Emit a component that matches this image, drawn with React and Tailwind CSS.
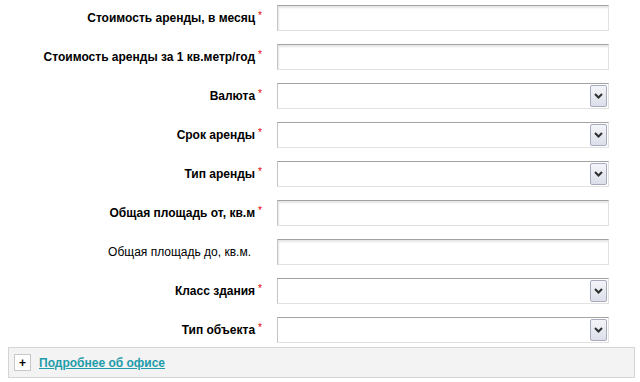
const rows = [
  { label: "Стоимость аренды, в месяц", required: true, type: "input" },
  { label: "Стоимость аренды за 1 кв.метр/год", required: true, type: "input" },
  { label: "Валюта", required: true, type: "select" },
  { label: "Срок аренды", required: true, type: "select" },
  { label: "Тип аренды", required: true, type: "select" },
  { label: "Общая площадь от, кв.м", required: true, type: "input" },
  { label: "Общая площадь до, кв.м.", required: false, type: "input" },
  { label: "Класс здания", required: true, type: "select" },
  { label: "Тип объекта", required: true, type: "select" },
];

const TextInput = () => (
  <div className="h-[26px] w-[332px] border border-t-[#a3a3a3] border-l-[#c4c4c4] border-r-[#e2e2e2] border-b-[#e2e2e2] bg-white shadow-[inset_1px_2px_2px_rgba(0,0,0,0.1)]" />
);

const SelectInput = () => (
  <div className="flex h-[26px] w-[332px] items-stretch justify-end border border-t-[#a3a3a3] border-l-[#c4c4c4] border-r-[#e2e2e2] border-b-[#e2e2e2] bg-white p-px">
    <div className="flex w-[17px] items-center justify-center rounded-[2px] border border-[#a7abbd] bg-gradient-to-b from-[#f4f5f9] to-[#dcdfea]">
      <svg width="9" height="6" viewBox="0 0 9 6">
        <path d="M1 1 L4.5 4.5 L8 1" fill="none" stroke="#2f2f2f" strokeWidth="2" />
      </svg>
    </div>
  </div>
);

export default function App() {
  return (
    <div className="h-[382px] w-[640px] bg-white pt-[5px] font-['Liberation_Sans',Arial,sans-serif] text-[12px] text-black">
      <div className="flex flex-col gap-[13px]">
        {rows.map((row) => (
          <div key={row.label} className="flex items-center">
            <div
              className={`w-[262px] text-right ${row.required ? "font-bold" : "pr-[11px]"}`}
            >
              {row.label}
              {row.required ? (
                <span className="relative top-[-3px] ml-[3px] text-[10px] font-normal text-[#e00000]">
                  *
                </span>
              ) : null}
            </div>
            <div className="ml-[15px]">
              {row.type === "select" ? <SelectInput /> : <TextInput />}
            </div>
          </div>
        ))}
      </div>
      <div className="mx-[8px] mt-[4px] flex h-[31px] w-[627px] items-center border border-[#d4d4d4] bg-[#f3f3f3] pl-[5px]">
        <div className="flex h-[17px] w-[17px] items-center justify-center border border-[#c8c8c8] bg-white text-[12px] font-bold leading-none">
          +
        </div>
        <a href="#" className="ml-[8px] font-bold text-[#1e9cab] underline">
          Подробнее об офисе
        </a>
      </div>
    </div>
  );
}
